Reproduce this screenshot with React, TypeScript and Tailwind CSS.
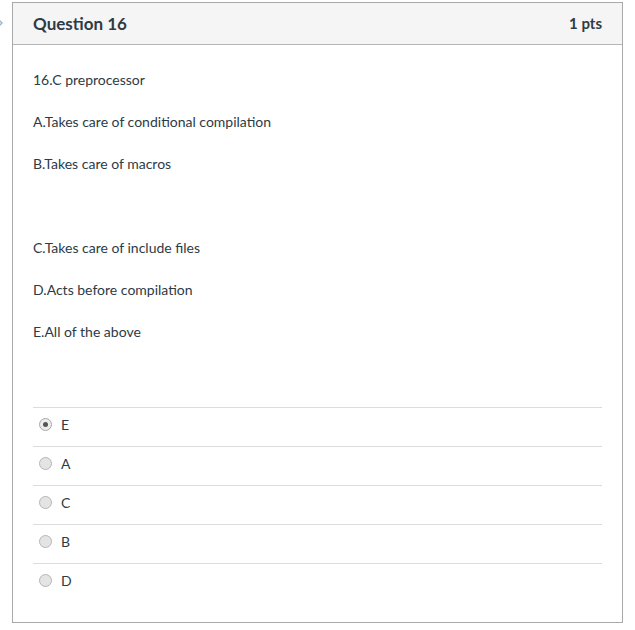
const answers = [
  { label: "E", checked: true },
  { label: "A", checked: false },
  { label: "C", checked: false },
  { label: "B", checked: false },
  { label: "D", checked: false },
];

const lines = [
  "16.C preprocessor",
  "A.Takes care of conditional compilation",
  "B.Takes care of macros",
  "",
  "C.Takes care of include files",
  "D.Acts before compilation",
  "E.All of the above",
];

const Radio = ({ checked }: { checked: boolean }) => (
  <span
    className={
      checked
        ? "flex items-center justify-center w-[13px] h-[13px] rounded-full border border-[#a9a9a9] bg-[#ececec]"
        : "flex w-[13px] h-[13px] rounded-full border border-[#b5b5b5] bg-[#e4e4e4]"
    }
  >
    {checked && <span className="w-[5px] h-[5px] rounded-full bg-[#555]" />}
  </span>
);

const App = () => {
  return (
    <div
      className="relative w-[635px] h-[630px] bg-white text-[#2d3b45] pt-[2px] pl-[12px]"
      style={{ fontFamily: "Lato, 'Open Sans', sans-serif" }}
    >
      <svg
        className="absolute left-[-4px] top-[18px]"
        width="8"
        height="10"
        viewBox="0 0 8 10"
      >
        <path d="M2 1 L6 5 L2 9" fill="none" stroke="#9fb4c8" strokeWidth="1.4" />
      </svg>
      <div className="w-[611px] h-[621px] border border-[#a9a9a9] flex flex-col">
        <div className="h-[42px] flex items-center justify-between bg-[#f5f5f5] border-b border-[#b5b5b5] px-[20px]">
          <h2 className="text-[17px] font-bold leading-none">Question 16</h2>
          <span className="text-[15px] font-bold leading-none">1 pts</span>
        </div>
        <div className="flex flex-col px-[20px] pt-[25px]">
          {lines.map((line, i) => (
            <p key={i} className="text-[14px] leading-[20px] h-[20px] mb-[22px]">
              {line}
            </p>
          ))}
          <div className="flex flex-col mt-[43px]">
            {answers.map((a) => (
              <div
                key={a.label}
                className="flex items-center h-[39px] border-t border-[#dcdcdc] pl-[6px] pb-[5px]"
              >
                <Radio checked={a.checked} />
                <span className="ml-[9px] text-[14px] leading-none">{a.label}</span>
              </div>
            ))}
          </div>
        </div>
      </div>
    </div>
  );
};

export default App;
